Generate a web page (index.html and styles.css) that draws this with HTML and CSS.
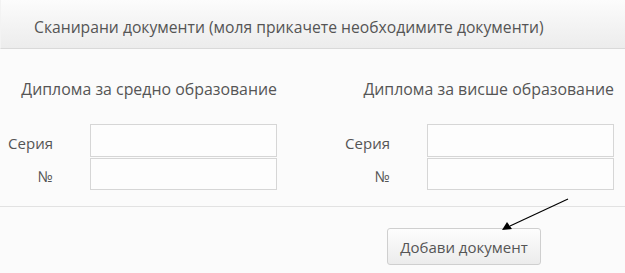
FILE: index.html
```html
<!DOCTYPE html>
<html>
<head>
<meta charset="utf-8">
<title>Сканирани документи</title>
<link rel="stylesheet" href="styles.css">
</head>
<body>
	<div class="panel">
		<div class="panel-heading">Сканирани документи (моля прикачете необходимите документи)</div>
		<div class="panel-body">
			<div class="doc-col">
				<h4 class="doc-title">Диплома за средно образование</h4>
				<div class="field">
					<label class="field-label">Серия</label>
					<input class="field-input" type="text">
				</div>
				<div class="field">
					<label class="field-label">№</label>
					<input class="field-input" type="text">
				</div>
			</div>
			<div class="doc-col">
				<h4 class="doc-title">Диплома за висше образование</h4>
				<div class="field">
					<label class="field-label">Серия</label>
					<input class="field-input" type="text">
				</div>
				<div class="field">
					<label class="field-label">№</label>
					<input class="field-input" type="text">
				</div>
			</div>
		</div>
		<div class="panel-footer">
			<button class="btn-add" type="button">Добави документ</button>
		</div>
		<svg class="pointer" width="625" height="273" viewBox="0 0 625 273">
			<line x1="568" y1="199" x2="510" y2="226" stroke="#000" stroke-width="1.2"/>
			<polygon points="502,230 507,222 512,229" fill="#000"/>
		</svg>
	</div>
</body>
</html>
```

FILE: styles.css
```css
html, body {
	margin: 0;
	padding: 0;
	background: #fbfbfb;
}

body {
	font-family: "Open Sans", "Liberation Sans", sans-serif;
	color: #555;
	width: 625px;
	height: 273px;
	overflow: hidden;
}

.panel {
	position: relative;
	height: 273px;
}

.panel-heading {
	height: 49px;
	box-sizing: border-box;
	padding: 17px 0 0 33px;
	font-size: 15.7px;
	line-height: 20px;
	background: linear-gradient(to bottom, #fcfcfc 0%, #ececec 100%);
	border-bottom: 1px solid #d9d9d9;
	border-left: 1px solid #f3f3f3;
}

.panel-body {
	display: flex;
	height: 158px;
	border-bottom: 1px solid #e2e2e2;
	box-sizing: border-box;
	padding-top: 29px;
}

.doc-col {
	width: 337px;
	flex-shrink: 0;
}

.doc-col + .doc-col {
	width: auto;
	flex: 1;
	min-width: 0;
}

.doc-title {
	width: 277px;
	margin: 0 0 24px;
	text-align: right;
	font-size: 15.9px;
	font-weight: normal;
	line-height: 22px;
	color: #555;
	white-space: nowrap;
}

.field {
	display: flex;
	align-items: center;
	height: 33px;
}

.field-label {
	width: 53px;
	text-align: right;
	font-size: 15px;
	margin-right: 37px;
	padding-top: 4px;
}

.field-input {
	width: 187px;
	height: 33px;
	box-sizing: border-box;
	margin: 0;
	border: 1px solid #d6d6d6;
	background: #fdfdfd;
	outline: none;
}

.field + .field .field-input {
	height: 32px;
}

.panel-footer {
	display: flex;
	padding: 21px 0 0 387px;
}

.btn-add {
	width: 154px;
	height: 37px;
	box-sizing: border-box;
	font-family: "Open Sans", "Liberation Sans", sans-serif;
	font-size: 15px;
	color: #555;
	background: linear-gradient(to bottom, #fdfdfd 0%, #ececec 100%);
	border: 1px solid #cfcfcf;
	border-radius: 3px;
	padding: 0;
}

.pointer {
	position: absolute;
	left: 0;
	top: 0;
	pointer-events: none;
}
```
